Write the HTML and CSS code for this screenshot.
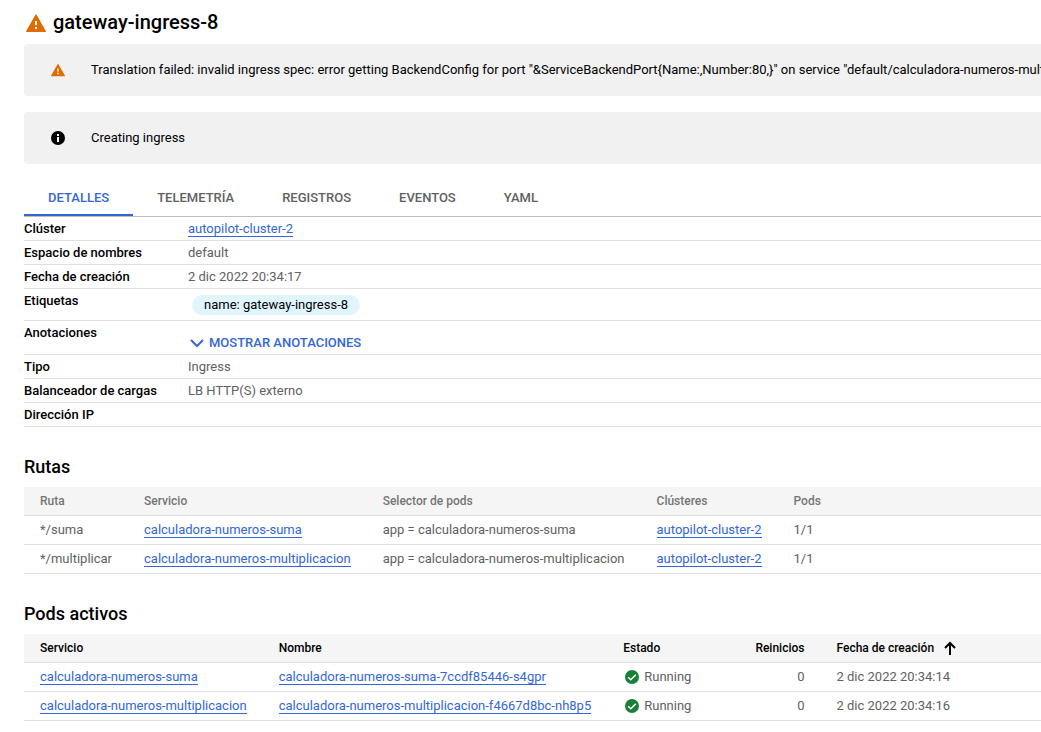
FILE: index.html
```html
<!DOCTYPE html>
<html lang="es">
<head>
  <meta charset="UTF-8">
  <title>gateway-ingress-8</title>
  <link rel="stylesheet" href="styles.css">
</head>
<body>

  <!-- iconos compartidos -->
  <svg class="sprite" aria-hidden="true">
    <symbol id="icon-warning" viewBox="0 0 20 18">
      <path fill="#e06c00" d="M9.4.7a.7.7 0 0 1 1.2 0l9.2 16.2a.7.7 0 0 1-.6 1.1H.8a.7.7 0 0 1-.6-1.1z"/>
      <path fill="#fff" d="M9 7h2v4H9zM9 13h2v2H9z"/>
    </symbol>
    <symbol id="icon-check" viewBox="0 0 14 14">
      <circle cx="7" cy="7" r="7" fill="#188038"/>
      <path fill="none" stroke="#fff" stroke-width="1.5" d="M3.2 7.2l2.6 2.6 5-5"/>
    </symbol>
  </svg>

  <main>
    <header class="page-title">
      <svg class="title-icon"><use href="#icon-warning"/></svg>
      <h1>gateway-ingress-8</h1>
    </header>

    <div class="message">
      <svg class="message-icon"><use href="#icon-warning"/></svg>
      <span>Translation failed: invalid ingress spec: error getting BackendConfig for port "&amp;ServiceBackendPort{Name:,Number:80,}" on service "default/calculadora-numeros-multiplicacion"</span>
    </div>

    <div class="message">
      <svg class="message-icon" viewBox="0 0 14 14">
        <circle cx="7" cy="7" r="7"/>
        <path fill="#fff" d="M6 3h2v2H6zM6 6h2v5H6z"/>
      </svg>
      <span>Creating ingress</span>
    </div>

    <nav class="tabs">
      <a class="active" href="#detalles">DETALLES</a>
      <a href="#telemetria">TELEMETRÍA</a>
      <a href="#registros">REGISTROS</a>
      <a href="#eventos">EVENTOS</a>
      <a href="#yaml">YAML</a>
    </nav>

    <table class="details" id="detalles">
      <tbody>
        <tr>
          <th scope="row">Clúster</th>
          <td><a class="link" href="#">autopilot-cluster-2</a></td>
        </tr>
        <tr>
          <th scope="row">Espacio de nombres</th>
          <td>default</td>
        </tr>
        <tr>
          <th scope="row">Fecha de creación</th>
          <td>2 dic 2022 20:34:17</td>
        </tr>
        <tr>
          <th scope="row">Etiquetas</th>
          <td><div class="chip">name: gateway-ingress-8</div></td>
        </tr>
        <tr>
          <th scope="row">Anotaciones</th>
          <td>
            <button class="expand" type="button">
              <svg viewBox="0 0 14 9"><path d="M1 1l6 6 6-6"/></svg>
              MOSTRAR ANOTACIONES
            </button>
          </td>
        </tr>
        <tr>
          <th scope="row">Tipo</th>
          <td>Ingress</td>
        </tr>
        <tr>
          <th scope="row">Balanceador de cargas</th>
          <td>LB HTTP(S) externo</td>
        </tr>
        <tr>
          <th scope="row">Dirección IP</th>
          <td></td>
        </tr>
      </tbody>
    </table>

    <h2>Rutas</h2>
    <table class="list routes">
      <thead>
        <tr>
          <th>Ruta</th>
          <th>Servicio</th>
          <th>Selector de pods</th>
          <th>Clústeres</th>
          <th class="fill">Pods</th>
        </tr>
      </thead>
      <tbody>
        <tr>
          <td>*/suma</td>
          <td><a class="link" href="#">calculadora-numeros-suma</a></td>
          <td>app = calculadora-numeros-suma</td>
          <td><a class="link" href="#">autopilot-cluster-2</a></td>
          <td>1/1</td>
        </tr>
        <tr>
          <td>*/multiplicar</td>
          <td><a class="link" href="#">calculadora-numeros-multiplicacion</a></td>
          <td>app = calculadora-numeros-multiplicacion</td>
          <td><a class="link" href="#">autopilot-cluster-2</a></td>
          <td>1/1</td>
        </tr>
      </tbody>
    </table>

    <h2>Pods activos</h2>
    <table class="list">
      <thead>
        <tr>
          <th>Servicio</th>
          <th>Nombre</th>
          <th>Estado</th>
          <th class="number">Reinicios</th>
          <th class="fill">
            <span class="sorted">
              Fecha de creación
              <svg viewBox="0 0 12 14"><path d="M6 14V2M1 7l5-5 5 5"/></svg>
            </span>
          </th>
        </tr>
      </thead>
      <tbody>
        <tr>
          <td><a class="link" href="#">calculadora-numeros-suma</a></td>
          <td><a class="link" href="#">calculadora-numeros-suma-7ccdf85446-s4gpr</a></td>
          <td><span class="status"><svg><use href="#icon-check"/></svg>Running</span></td>
          <td class="number">0</td>
          <td>2 dic 2022 20:34:14</td>
        </tr>
        <tr>
          <td><a class="link" href="#">calculadora-numeros-multiplicacion</a></td>
          <td><a class="link" href="#">calculadora-numeros-multiplicacion-f4667d8bc-nh8p5</a></td>
          <td><span class="status"><svg><use href="#icon-check"/></svg>Running</span></td>
          <td class="number">0</td>
          <td>2 dic 2022 20:34:16</td>
        </tr>
      </tbody>
    </table>
  </main>

</body>
</html>
```
FILE: styles.css
```css
body {
  margin: 0;
  font-family: Roboto, "Liberation Sans", sans-serif;
  font-size: 13px;
  line-height: 20px;
  color: #000;
  background: #fff;
}

main {
  padding: 0 0 11px 24px;
  overflow: hidden;
}

.sprite {
  position: absolute;
  width: 0;
  height: 0;
}

.page-title {
  display: flex;
  align-items: center;
  gap: 7px;
  height: 44px;
  padding-left: 2px;
}

.title-icon {
  width: 20px;
  height: 18px;
  margin-top: 2px;
}

h1 {
  margin: 0;
  font-size: 20px;
  font-weight: 500;
  line-height: 24px;
}

.message {
  display: flex;
  align-items: center;
  gap: 26px;
  height: 52px;
  margin-bottom: 16px;
  padding-left: 27px;
  border-radius: 4px 0 0 4px;
  background: #f1f1f1;
  white-space: nowrap;
  overflow: hidden;
}

.message-icon {
  flex: none;
  width: 14px;
  height: 14px;
}

.tabs {
  display: flex;
  border-bottom: 1px solid #bdbdbd;
}

.tabs a {
  padding: 8px 24px 6px;
  border-bottom: 2px solid transparent;
  font-weight: 500;
  color: #616161;
  text-decoration: none;
}

.tabs .active {
  border-color: #3367d6;
  color: #3367d6;
}

table {
  width: 100%;
  border-collapse: separate;
  border-spacing: 0;
}

th, td {
  border-bottom: 1px solid #e0e0e0;
  text-align: left;
  white-space: nowrap;
}

th {
  font-weight: 500;
}

td {
  color: #616161;
}

.link {
  border-bottom: 1px solid #3367d6;
  color: #3367d6;
  text-decoration: none;
}

.details th, .details td {
  padding: 2px 0 1px;
  vertical-align: top;
}

.details th {
  width: 164px;
}

.chip {
  width: max-content;
  margin: 4px;
  padding: 0 12px;
  border-radius: 10px;
  background: #e1f5fe;
  color: #000;
}

.expand {
  display: flex;
  align-items: center;
  gap: 5px;
  margin: 10px 0 0;
  padding: 0 2px;
  border: 0;
  background: none;
  font: inherit;
  font-weight: 500;
  color: #3367d6;
  cursor: pointer;
}

.expand svg {
  width: 14px;
  height: 9px;
  fill: none;
  stroke: #3367d6;
  stroke-width: 2;
}

h2 {
  margin: 28px 0 8px;
  font-size: 18px;
  font-weight: 500;
  line-height: 24px;
}

.list th, .list td {
  padding: 4px 16px;
}

.list th {
  background: #f5f5f5;
  font-size: 12px;
}

.routes th {
  color: #757575;
}

.list .fill {
  width: 100%;
}

.list .number {
  padding-left: 48px;
  text-align: right;
}

.sorted {
  display: flex;
  align-items: center;
  gap: 10px;
}

.sorted svg {
  width: 12px;
  height: 14px;
  fill: none;
  stroke: #000;
  stroke-width: 2;
}

.status {
  display: flex;
  align-items: center;
  gap: 5px;
  padding-left: 2px;
}

.status svg {
  width: 14px;
  height: 14px;
}
```
